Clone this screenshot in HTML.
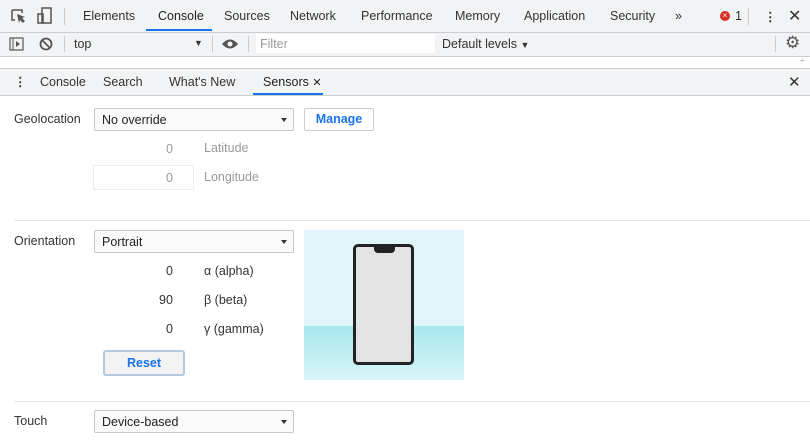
<!DOCTYPE html><html><head><style>
body{margin:0;width:810px;height:443px;overflow:hidden;font-family:"Liberation Sans",sans-serif;font-size:12.5px;color:#333;background:#fff;position:relative}
.a{position:absolute}
.bar{background:#f1f3f4;left:0;width:810px}
.t{position:absolute;top:9px;color:#333}
.sel{position:absolute;border:1px solid #c8c8c8;border-radius:2px;background:#fafafa;height:23px;box-sizing:border-box;padding:4px 7px;font-size:12.5px;color:#222}
.sel:after{content:"";position:absolute;right:6px;top:9px;border:3.5px solid transparent;border-top:4px solid #333;border-bottom:0}
.g{color:#999}
</style></head><body>
<div class="a bar" style="top:0;height:32px;border-bottom:1px solid #cbcdd1"></div>
<svg class="a" style="left:10px;top:8px" width="20" height="18" viewBox="0 0 20 18"><path d="M2 2h10v3M2 2v10h3" fill="none" stroke="#555" stroke-width="1.5"/><path d="M7 6l8 3-3 1 3 3-2 2-3-3-1 3z" fill="#555"/></svg>
<svg class="a" style="left:36px;top:7px" width="18" height="18"><rect x="6" y="1" width="9" height="15" fill="none" stroke="#555" stroke-width="1.5"/><rect x="2" y="7" width="5" height="9" fill="none" stroke="#555" stroke-width="1.5"/></svg>
<div class="a" style="left:64px;top:8px;width:1px;height:17px;background:#ccc"></div>
<span class="t" style="left:83px">Elements</span>
<span class="t" style="left:158px;color:#222">Console</span>
<div class="a" style="left:146px;top:29px;width:66px;height:2px;background:#1a73e8"></div>
<span class="t" style="left:224px">Sources</span>
<span class="t" style="left:290px">Network</span>
<span class="t" style="left:361px">Performance</span>
<span class="t" style="left:455px">Memory</span>
<span class="t" style="left:524px">Application</span>
<span class="t" style="left:610px">Security</span>
<span class="t" style="left:675px">»</span>
<div class="a" style="left:720px;top:11px;width:10px;height:10px;border-radius:50%;background:#d93025;color:#fff;font-size:8px;line-height:10px;text-align:center">×</div>
<span class="t" style="left:735px">1</span>
<div class="a" style="left:748px;top:8px;width:1px;height:17px;background:#ccc"></div>
<span class="t" style="left:764px;font-weight:bold">⋮</span>
<span class="t" style="left:788px;font-size:16px;top:6px">✕</span>
<div class="a bar" style="top:33px;height:23px;border-bottom:1px solid #cbcdd1"></div>
<svg class="a" style="left:9px;top:36px" width="16" height="16"><rect x="1" y="2" width="13" height="12" fill="none" stroke="#555" stroke-width="1.2"/><path d="M4 2v12" stroke="#555"/><path d="M7 5l4 3-4 3z" fill="#555"/></svg>
<svg class="a" style="left:39px;top:37px" width="14" height="14"><circle cx="7" cy="7" r="5.5" fill="none" stroke="#555" stroke-width="1.8"/><path d="M3 3l8 8" stroke="#555" stroke-width="1.8"/></svg>
<div class="a" style="left:64px;top:36px;width:1px;height:16px;background:#ccc"></div>
<span class="a" style="left:74px;top:37px">top</span>
<span class="a" style="left:194px;top:38px;font-size:9px">▼</span>
<div class="a" style="left:212px;top:36px;width:1px;height:16px;background:#ccc"></div>
<svg class="a" style="left:221px;top:37px" width="18" height="14"><path d="M1 7Q9-2 17 7Q9 16 1 7z" fill="#555"/><circle cx="9" cy="7" r="2.5" fill="#f1f3f4"/></svg>
<div class="a" style="left:248px;top:36px;width:1px;height:16px;background:#ccc"></div>
<div class="a" style="left:256px;top:34px;width:179px;height:19px;background:#fff"></div>
<span class="a g" style="left:260px;top:37px">Filter</span>
<span class="a" style="left:442px;top:37px">Default levels <span style="font-size:9px">▼</span></span>
<div class="a" style="left:775px;top:36px;width:1px;height:16px;background:#ccc"></div>
<span class="a" style="left:785px;top:33px;font-size:17px;color:#555">⚙</span>
<div class="a" style="left:0;top:68px;width:810px;height:28px;background:#f1f3f4;border-top:1px solid #cbcdd1;border-bottom:1px solid #cbcdd1;box-sizing:border-box"></div>
<span class="a" style="left:800px;top:56px;font-size:8px;color:#999">÷</span>
<span class="a" style="left:14px;top:74px;font-weight:bold">⋮</span>
<span class="a" style="left:40px;top:75px">Console</span>
<span class="a" style="left:103px;top:75px">Search</span>
<span class="a" style="left:169px;top:75px">What's New</span>
<span class="a" style="left:263px;top:75px;color:#222">Sensors <span style="font-size:11px">✕</span></span>
<div class="a" style="left:253px;top:93px;width:70px;height:2px;background:#1a73e8"></div>
<span class="a" style="left:788px;top:73px;font-size:15px">✕</span>

<span class="a" style="left:14px;top:112px">Geolocation</span>
<div class="sel" style="left:94px;top:108px;width:200px">No override</div>
<div class="a" style="left:304px;top:108px;width:70px;height:23px;box-sizing:border-box;border:1px solid #ccc;border-radius:2px;color:#1a73e8;font-weight:bold;text-align:center;line-height:21px">Manage</div>
<span class="a g" style="left:166px;top:142px">0</span>
<span class="a g" style="left:204px;top:141px">Latitude</span>
<div class="a" style="left:93px;top:165px;width:101px;height:25px;border:1px solid #eee;box-sizing:border-box"></div>
<span class="a g" style="left:166px;top:171px">0</span>
<span class="a g" style="left:204px;top:170px">Longitude</span>
<div class="a" style="left:14px;top:220px;width:796px;height:1px;background:#e6e6e6"></div>
<span class="a" style="left:14px;top:234px">Orientation</span>
<div class="sel" style="left:94px;top:230px;width:200px">Portrait</div>
<span class="a" style="left:166px;top:264px">0</span><span class="a" style="left:204px;top:264px">α (alpha)</span>
<span class="a" style="left:159px;top:293px">90</span><span class="a" style="left:204px;top:293px">β (beta)</span>
<span class="a" style="left:166px;top:322px">0</span><span class="a" style="left:204px;top:322px">γ (gamma)</span>
<div class="a" style="left:103px;top:350px;width:82px;height:26px;box-sizing:border-box;border:2px solid #b4c8e0;border-radius:3px;background:#f3f3f3;color:#1a73e8;font-weight:bold;text-align:center;line-height:22px">Reset</div>
<div class="a" style="left:304px;top:230px;width:160px;height:150px;background:linear-gradient(#dff5fa,#dff5fa 96px,#a8e8ee 96px,#d8f5f8)"></div>
<div class="a" style="left:353px;top:244px;width:61px;height:121px;box-sizing:border-box;border:3px solid #222;border-radius:5px;background:#e3e3e3"></div>
<div class="a" style="left:374px;top:246px;width:21px;height:7px;background:#222;border-radius:0 0 4px 4px"></div>
<div class="a" style="left:14px;top:401px;width:796px;height:1px;background:#e6e6e6"></div>
<span class="a" style="left:14px;top:414px">Touch</span>
<div class="sel" style="left:94px;top:410px;width:200px">Device-based</div>
</body></html>
